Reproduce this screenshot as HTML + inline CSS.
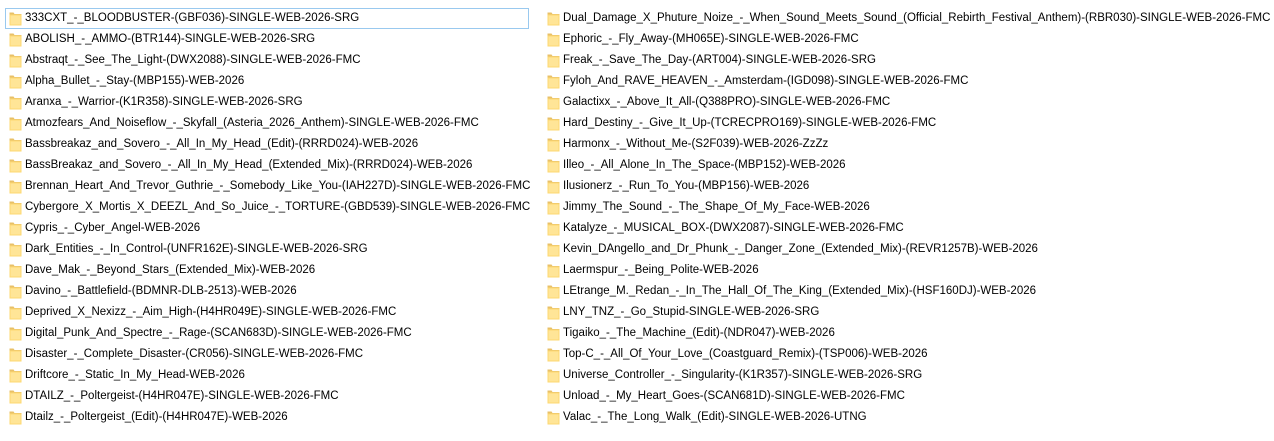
<!DOCTYPE html><html><head><style>
body{margin:0;background:#fff;width:1274px;height:441px;overflow:hidden;font-family:"Liberation Sans",sans-serif;font-size:11.5px;color:#000}
.col{position:absolute;top:8px}
.r{height:21px;position:relative;white-space:nowrap}
.r span{position:absolute;left:20px;top:3px;line-height:14px}
.f{position:absolute;left:4px;top:3px;width:13px;height:15px}
.sel{border:1px solid #99c9ef;box-sizing:border-box}
</style></head><body>
<svg width="0" height="0" style="position:absolute"><defs><symbol id="fd" viewBox="0 0 13 15"><path d="M0.5 1.5h4l1 1.5h7v11.5h-12z" fill="#e8c068"/><path d="M0.5 3.5h12v11h-12z" fill="#fcd872"/><path d="M1.5 4.5h10v9h-10z" fill="#ffe597"/></symbol></defs></svg>
<div class="col" style="left:5px;width:524px">
<div class="r sel"><svg class="f" style="left:3px;top:2px"><use href="#fd"/></svg><span style="left:19px;top:2px">333CXT_-_BLOODBUSTER-(GBF036)-SINGLE-WEB-2026-SRG</span></div>
<div class="r"><svg class="f"><use href="#fd"/></svg><span>ABOLISH_-_AMMO-(BTR144)-SINGLE-WEB-2026-SRG</span></div>
<div class="r"><svg class="f"><use href="#fd"/></svg><span>Abstraqt_-_See_The_Light-(DWX2088)-SINGLE-WEB-2026-FMC</span></div>
<div class="r"><svg class="f"><use href="#fd"/></svg><span>Alpha_Bullet_-_Stay-(MBP155)-WEB-2026</span></div>
<div class="r"><svg class="f"><use href="#fd"/></svg><span>Aranxa_-_Warrior-(K1R358)-SINGLE-WEB-2026-SRG</span></div>
<div class="r"><svg class="f"><use href="#fd"/></svg><span>Atmozfears_And_Noiseflow_-_Skyfall_(Asteria_2026_Anthem)-SINGLE-WEB-2026-FMC</span></div>
<div class="r"><svg class="f"><use href="#fd"/></svg><span>Bassbreakaz_and_Sovero_-_All_In_My_Head_(Edit)-(RRRD024)-WEB-2026</span></div>
<div class="r"><svg class="f"><use href="#fd"/></svg><span>BassBreakaz_and_Sovero_-_All_In_My_Head_(Extended_Mix)-(RRRD024)-WEB-2026</span></div>
<div class="r"><svg class="f"><use href="#fd"/></svg><span>Brennan_Heart_And_Trevor_Guthrie_-_Somebody_Like_You-(IAH227D)-SINGLE-WEB-2026-FMC</span></div>
<div class="r"><svg class="f"><use href="#fd"/></svg><span>Cybergore_X_Mortis_X_DEEZL_And_So_Juice_-_TORTURE-(GBD539)-SINGLE-WEB-2026-FMC</span></div>
<div class="r"><svg class="f"><use href="#fd"/></svg><span>Cypris_-_Cyber_Angel-WEB-2026</span></div>
<div class="r"><svg class="f"><use href="#fd"/></svg><span>Dark_Entities_-_In_Control-(UNFR162E)-SINGLE-WEB-2026-SRG</span></div>
<div class="r"><svg class="f"><use href="#fd"/></svg><span>Dave_Mak_-_Beyond_Stars_(Extended_Mix)-WEB-2026</span></div>
<div class="r"><svg class="f"><use href="#fd"/></svg><span>Davino_-_Battlefield-(BDMNR-DLB-2513)-WEB-2026</span></div>
<div class="r"><svg class="f"><use href="#fd"/></svg><span>Deprived_X_Nexizz_-_Aim_High-(H4HR049E)-SINGLE-WEB-2026-FMC</span></div>
<div class="r"><svg class="f"><use href="#fd"/></svg><span>Digital_Punk_And_Spectre_-_Rage-(SCAN683D)-SINGLE-WEB-2026-FMC</span></div>
<div class="r"><svg class="f"><use href="#fd"/></svg><span>Disaster_-_Complete_Disaster-(CR056)-SINGLE-WEB-2026-FMC</span></div>
<div class="r"><svg class="f"><use href="#fd"/></svg><span>Driftcore_-_Static_In_My_Head-WEB-2026</span></div>
<div class="r"><svg class="f"><use href="#fd"/></svg><span>DTAILZ_-_Poltergeist-(H4HR047E)-SINGLE-WEB-2026-FMC</span></div>
<div class="r"><svg class="f"><use href="#fd"/></svg><span>Dtailz_-_Poltergeist_(Edit)-(H4HR047E)-WEB-2026</span></div>
</div>
<div class="col" style="left:543px;width:720px">
<div class="r"><svg class="f"><use href="#fd"/></svg><span>Dual_Damage_X_Phuture_Noize_-_When_Sound_Meets_Sound_(Official_Rebirth_Festival_Anthem)-(RBR030)-SINGLE-WEB-2026-FMC</span></div>
<div class="r"><svg class="f"><use href="#fd"/></svg><span>Ephoric_-_Fly_Away-(MH065E)-SINGLE-WEB-2026-FMC</span></div>
<div class="r"><svg class="f"><use href="#fd"/></svg><span>Freak_-_Save_The_Day-(ART004)-SINGLE-WEB-2026-SRG</span></div>
<div class="r"><svg class="f"><use href="#fd"/></svg><span>Fyloh_And_RAVE_HEAVEN_-_Amsterdam-(IGD098)-SINGLE-WEB-2026-FMC</span></div>
<div class="r"><svg class="f"><use href="#fd"/></svg><span>Galactixx_-_Above_It_All-(Q388PRO)-SINGLE-WEB-2026-FMC</span></div>
<div class="r"><svg class="f"><use href="#fd"/></svg><span>Hard_Destiny_-_Give_It_Up-(TCRECPRO169)-SINGLE-WEB-2026-FMC</span></div>
<div class="r"><svg class="f"><use href="#fd"/></svg><span>Harmonx_-_Without_Me-(S2F039)-WEB-2026-ZzZz</span></div>
<div class="r"><svg class="f"><use href="#fd"/></svg><span>Illeo_-_All_Alone_In_The_Space-(MBP152)-WEB-2026</span></div>
<div class="r"><svg class="f"><use href="#fd"/></svg><span>Ilusionerz_-_Run_To_You-(MBP156)-WEB-2026</span></div>
<div class="r"><svg class="f"><use href="#fd"/></svg><span>Jimmy_The_Sound_-_The_Shape_Of_My_Face-WEB-2026</span></div>
<div class="r"><svg class="f"><use href="#fd"/></svg><span>Katalyze_-_MUSICAL_BOX-(DWX2087)-SINGLE-WEB-2026-FMC</span></div>
<div class="r"><svg class="f"><use href="#fd"/></svg><span>Kevin_DAngello_and_Dr_Phunk_-_Danger_Zone_(Extended_Mix)-(REVR1257B)-WEB-2026</span></div>
<div class="r"><svg class="f"><use href="#fd"/></svg><span>Laermspur_-_Being_Polite-WEB-2026</span></div>
<div class="r"><svg class="f"><use href="#fd"/></svg><span>LEtrange_M._Redan_-_In_The_Hall_Of_The_King_(Extended_Mix)-(HSF160DJ)-WEB-2026</span></div>
<div class="r"><svg class="f"><use href="#fd"/></svg><span>LNY_TNZ_-_Go_Stupid-SINGLE-WEB-2026-SRG</span></div>
<div class="r"><svg class="f"><use href="#fd"/></svg><span>Tigaiko_-_The_Machine_(Edit)-(NDR047)-WEB-2026</span></div>
<div class="r"><svg class="f"><use href="#fd"/></svg><span>Top-C_-_All_Of_Your_Love_(Coastguard_Remix)-(TSP006)-WEB-2026</span></div>
<div class="r"><svg class="f"><use href="#fd"/></svg><span>Universe_Controller_-_Singularity-(K1R357)-SINGLE-WEB-2026-SRG</span></div>
<div class="r"><svg class="f"><use href="#fd"/></svg><span>Unload_-_My_Heart_Goes-(SCAN681D)-SINGLE-WEB-2026-FMC</span></div>
<div class="r"><svg class="f"><use href="#fd"/></svg><span>Valac_-_The_Long_Walk_(Edit)-SINGLE-WEB-2026-UTNG</span></div>
</div>
</body></html>
